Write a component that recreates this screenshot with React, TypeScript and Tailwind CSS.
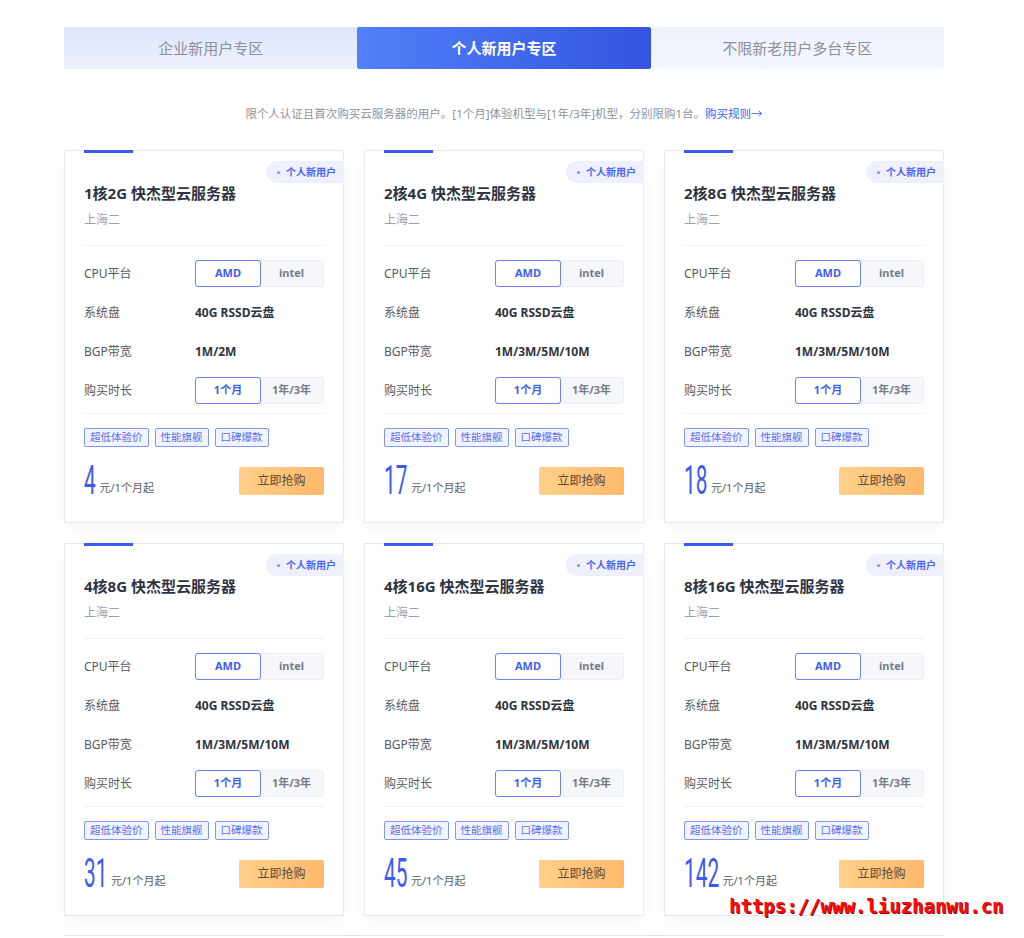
import { useState } from 'react';

const tabs = ['企业新用户专区', '个人新用户专区', '不限新老用户多台专区'];

const products = [
  { name: '1核2G 快杰型云服务器', bw: '1M/2M', price: '4' },
  { name: '2核4G 快杰型云服务器', bw: '1M/3M/5M/10M', price: '17' },
  { name: '2核8G 快杰型云服务器', bw: '1M/3M/5M/10M', price: '18' },
  { name: '4核8G 快杰型云服务器', bw: '1M/3M/5M/10M', price: '31' },
  { name: '4核16G 快杰型云服务器', bw: '1M/3M/5M/10M', price: '45' },
  { name: '8核16G 快杰型云服务器', bw: '1M/3M/5M/10M', price: '142' },
];

const tags = ['超低体验价', '性能旗舰', '口碑爆款'];

function Toggle({ options }: { options: string[] }) {
  const [active, setActive] = useState(0);
  return (
    <div className="flex h-[27px] w-[129px] rounded-[3px] border border-[#eceef6] bg-[#f6f7fb]">
      {options.map((o, i) => (
        <button
          key={o}
          onClick={() => setActive(i)}
          className={
            i === active
              ? '-m-px flex h-[27px] w-[66px] items-center justify-center rounded-[3px] border border-[#6a84f3] bg-white text-[11px] font-bold text-[#3f5ef0]'
              : 'flex flex-1 items-center justify-center text-[11px] font-bold text-[#777b86]'
          }
        >
          {o}
        </button>
      ))}
    </div>
  );
}

function Row({ label, children }: { label: string; children: React.ReactNode }) {
  return (
    <div className="flex h-[27px] items-center">
      <div className="w-[111px] text-[12px] text-[#555a66]">{label}</div>
      {children}
    </div>
  );
}

function Card({ p }: { p: (typeof products)[number] }) {
  return (
    <div className="relative border border-[#e6e9f2] bg-white px-[19px] pt-[32px] pb-[27px] shadow-[0_6px_14px_rgba(30,40,80,0.04)]">
      <div className="absolute top-[-1px] left-[19px] h-[3px] w-[49px] bg-[#3d5af1]" />
      <div className="absolute top-[10px] right-[-1px] flex h-[22px] w-[78px] items-center gap-[6px] rounded-l-full bg-[#eef1fd] pl-[11px] text-[10px] font-semibold text-[#4a64f0]">
        <span className="h-[3px] w-[3px] rounded-full bg-[#7b8ff5]" />
        个人新用户
      </div>
      <div className="text-[15px] leading-[20px] font-bold text-[#2f3443]">{p.name}</div>
      <div className="mt-[9px] text-[12px] leading-[16px] text-[#9a9ea8]">上海二</div>
      <div className="mt-[17px] h-px bg-[#eef0f5]" />
      <div className="mt-[14px] flex flex-col gap-[12px]">
        <Row label="CPU平台">
          <Toggle options={['AMD', 'intel']} />
        </Row>
        <Row label="系统盘">
          <span className="text-[12px] font-bold text-[#2f3443]">40G RSSD云盘</span>
        </Row>
        <Row label="BGP带宽">
          <span className="text-[12px] font-bold text-[#2f3443]">{p.bw}</span>
        </Row>
        <Row label="购买时长">
          <Toggle options={['1个月', '1年/3年']} />
        </Row>
      </div>
      <div className="mt-[9px] h-px bg-[#eef0f5]" />
      <div className="mt-[14px] flex gap-[6px]">
        {tags.map((t) => (
          <span
            key={t}
            className="flex h-[19px] items-center rounded-[2px] border border-[#7f97f5] bg-[#f1f4ff] px-[5px] text-[10.5px] text-[#5570ee]"
          >
            {t}
          </span>
        ))}
      </div>
      <div className="mt-[18px] flex items-end justify-between">
        <div className="flex items-end">
          <span className="relative h-[30px]" style={{ width: `${p.price.length * 11.5 + 2}px` }}>
            <span className="absolute bottom-[-6px] left-0 origin-bottom-left scale-x-[0.52] font-['Roboto'] text-[40px] leading-none font-normal text-[#3d5af1]">
              {p.price}
            </span>
          </span>
          <span className="ml-[2px] text-[11px] leading-[14px] text-[#5a5f6b]">元/1个月起</span>
        </div>
        <button className="flex h-[28px] w-[85px] items-center justify-center rounded-[2px] bg-gradient-to-r from-[#ffd08a] to-[#ffb86a] text-[12px] text-[#5b4632]">
          立即抢购
        </button>
      </div>
    </div>
  );
}

export default function App() {
  const [tab, setTab] = useState(1);

  return (
    <div className="relative min-h-[938px] bg-white font-['Noto_Sans','Noto_Sans_CJK_SC',sans-serif]">
      <div className="ml-[64px] w-[880px] pt-[27px]">
        <div className="flex h-[42px]">
          {tabs.map((t, i) => (
            <button
              key={t}
              onClick={() => setTab(i)}
              className={
                i === tab
                  ? 'flex flex-1 items-center justify-center rounded-[2px] bg-gradient-to-r from-[#5280f8] to-[#3354e0] text-[15px] font-bold text-white'
                  : i === 0
                    ? 'flex flex-1 items-center justify-center bg-gradient-to-b from-[#dfe5fb] to-[#edf1fd] text-[15px] text-[#8b909f]'
                    : 'flex flex-1 items-center justify-center bg-gradient-to-b from-[#eef1fd] to-[#f5f7fe] text-[15px] text-[#8b909f]'
              }
            >
              {t}
            </button>
          ))}
        </div>

        <p className="mt-[37px] text-center text-[11.5px] leading-[16px] text-[#8e929e]">
          限个人认证且首次购买云服务器的用户。[1个月]体验机型与[1年/3年]机型，分别限购1台。
          <a className="text-[#3f5ef0]">购买规则→</a>
        </p>

        <div className="mt-[28px] grid grid-cols-3 gap-[20px]">
          {products.map((p) => (
            <Card key={p.name} p={p} />
          ))}
        </div>

        <div className="mt-[19px] h-px bg-[#e4e6ec]" />
      </div>

      <div className="absolute top-[895px] left-[729px] font-['DejaVu_Sans_Mono',monospace] text-[19px] leading-[22px] font-bold text-[#ff0a0a] [text-shadow:1px_1px_0_#8a0000]">
        https://www.liuzhanwu.cn
      </div>
    </div>
  );
}
